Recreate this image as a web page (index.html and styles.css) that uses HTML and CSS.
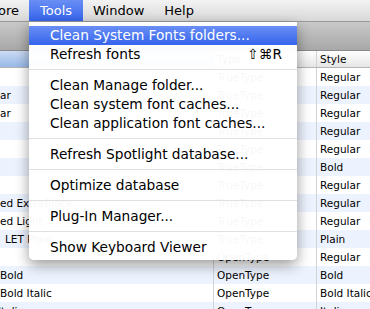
FILE: index.html
```html
<!DOCTYPE html>
<html lang="en">
<head>
    <meta charset="UTF-8">
    <title>Tools menu</title>
    <link rel="stylesheet" href="styles.css">
</head>
<body>
<div class="menubar">
    <span class="menubar-item first">ore</span>
    <span class="menubar-item active">Tools</span>
    <span class="menubar-item">Window</span>
    <span class="menubar-item">Help</span>
</div>

<div class="window">
    <div class="toolbar"></div>
    <div class="list">
        <div class="list-head">
            <div class="cell name sorted"></div>
            <div class="cell type">Type</div>
            <div class="cell style">Style</div>
        </div>
        <div class="row"><div class="cell name"></div><div class="cell type">TrueType</div><div class="cell style">Regular</div></div>
        <div class="row"><div class="cell name">ar</div><div class="cell type">TrueType</div><div class="cell style">Regular</div></div>
        <div class="row"><div class="cell name">ar</div><div class="cell type">TrueType</div><div class="cell style">Regular</div></div>
        <div class="row"><div class="cell name"></div><div class="cell type">TrueType</div><div class="cell style">Regular</div></div>
        <div class="row"><div class="cell name"></div><div class="cell type">TrueType</div><div class="cell style">Regular</div></div>
        <div class="row"><div class="cell name"></div><div class="cell type">TrueType</div><div class="cell style">Bold</div></div>
        <div class="row"><div class="cell name"></div><div class="cell type">TrueType</div><div class="cell style">Regular</div></div>
        <div class="row"><div class="cell name">ed ExtraBlack</div><div class="cell type">TrueType</div><div class="cell style">Regular</div></div>
        <div class="row"><div class="cell name">ed Light</div><div class="cell type">TrueType</div><div class="cell style">Regular</div></div>
        <div class="row"><div class="cell name indent">LET Plain</div><div class="cell type">TrueType</div><div class="cell style">Plain</div></div>
        <div class="row"><div class="cell name"></div><div class="cell type">OpenType</div><div class="cell style">Regular</div></div>
        <div class="row"><div class="cell name">Bold</div><div class="cell type">OpenType</div><div class="cell style">Bold</div></div>
        <div class="row"><div class="cell name">Bold Italic</div><div class="cell type">OpenType</div><div class="cell style">Bold Italic</div></div>
        <div class="row"><div class="cell name cut">Italic</div><div class="cell type">OpenType</div><div class="cell style">Italic</div></div>
    </div>
</div>

<!-- Tools menu, open -->
<div class="menu">
    <div class="menu-item selected">Clean System Fonts folders...</div>
    <div class="menu-item">Refresh fonts<span class="shortcut">⇧⌘R</span></div>
    <div class="separator"></div>
    <div class="menu-item">Clean Manage folder...</div>
    <div class="menu-item">Clean system font caches...</div>
    <div class="menu-item">Clean application font caches...</div>
    <div class="separator"></div>
    <div class="menu-item">Refresh Spotlight database...</div>
    <div class="separator"></div>
    <div class="menu-item">Optimize database</div>
    <div class="separator"></div>
    <div class="menu-item">Plug-In Manager...</div>
    <div class="separator"></div>
    <div class="menu-item">Show Keyboard Viewer</div>
</div>
</body>
</html>
```

FILE: styles.css
```css
body {
    margin: 0;
    width: 370px;
    height: 309px;
    overflow: hidden;
    position: relative;
    font-family: "DejaVu Sans", sans-serif;
    background: #fff;
    color: #000;
}
.menubar {
    display: flex;
    height: 21px;
    line-height: 21px;
    font-size: 13px;
    background: linear-gradient(#f3f3f3, #d8d8d8);
    border-bottom: 1px solid #9b9b9b;
    white-space: nowrap;
}
.menubar-item {
    padding: 0 10px;
}
.menubar-item.first {
    margin-left: -12px;
}
.menubar-item.active {
    padding: 0 11px;
    color: white;
    background: linear-gradient(#6a8ef4, #3565ed);
}
.toolbar {
    height: 28px;
    background: linear-gradient(#c9c9c9, #a8a8a8);
}
.list {
    font-size: 10.5px;
}
.list-head {
    display: flex;
    height: 16px;
    line-height: 16px;
    background: linear-gradient(#ffffff, #e6e6e6);
    border-top: 1px solid #8a8a8a;
    border-bottom: 1px solid #b5b5b5;
}
.row {
    display: flex;
    height: 18px;
    line-height: 18px;
}
.row:nth-child(odd) {
    background: #edf3fe;
}
.cell {
    white-space: nowrap;
    overflow: hidden;
}
.name {
    width: 213px;
    border-right: 1px solid #d3d3d3;
}
.name.sorted {
    background: linear-gradient(#cbdbf3, #98b8e7);
}
.name.indent {
    padding-left: 5px;
    width: 208px;
}
.name.cut {
    text-indent: -2px;
}
.type {
    width: 99px;
    padding-left: 3px;
    border-right: 1px solid #d3d3d3;
}
.style {
    flex: 1;
    padding-left: 3px;
}
.menu {
    position: absolute;
    left: 29px;
    top: 22px;
    width: 268px;
    padding: 4px 0 3px;
    background: rgba(255, 255, 255, 0.97);
    border-radius: 0 0 5px 5px;
    box-shadow: 0 5px 14px rgba(0, 0, 0, 0.4);
    font-size: 13.7px;
}
.menu-item {
    display: flex;
    justify-content: space-between;
    height: 19px;
    line-height: 19px;
    padding: 0 15px 0 21px;
    white-space: nowrap;
}
.menu-item.selected {
    color: white;
    background: linear-gradient(#6a8ef4, #3565ed);
}
.separator {
    height: 1px;
    margin: 5px 0 6px;
    background: #e0e0e0;
}
```
